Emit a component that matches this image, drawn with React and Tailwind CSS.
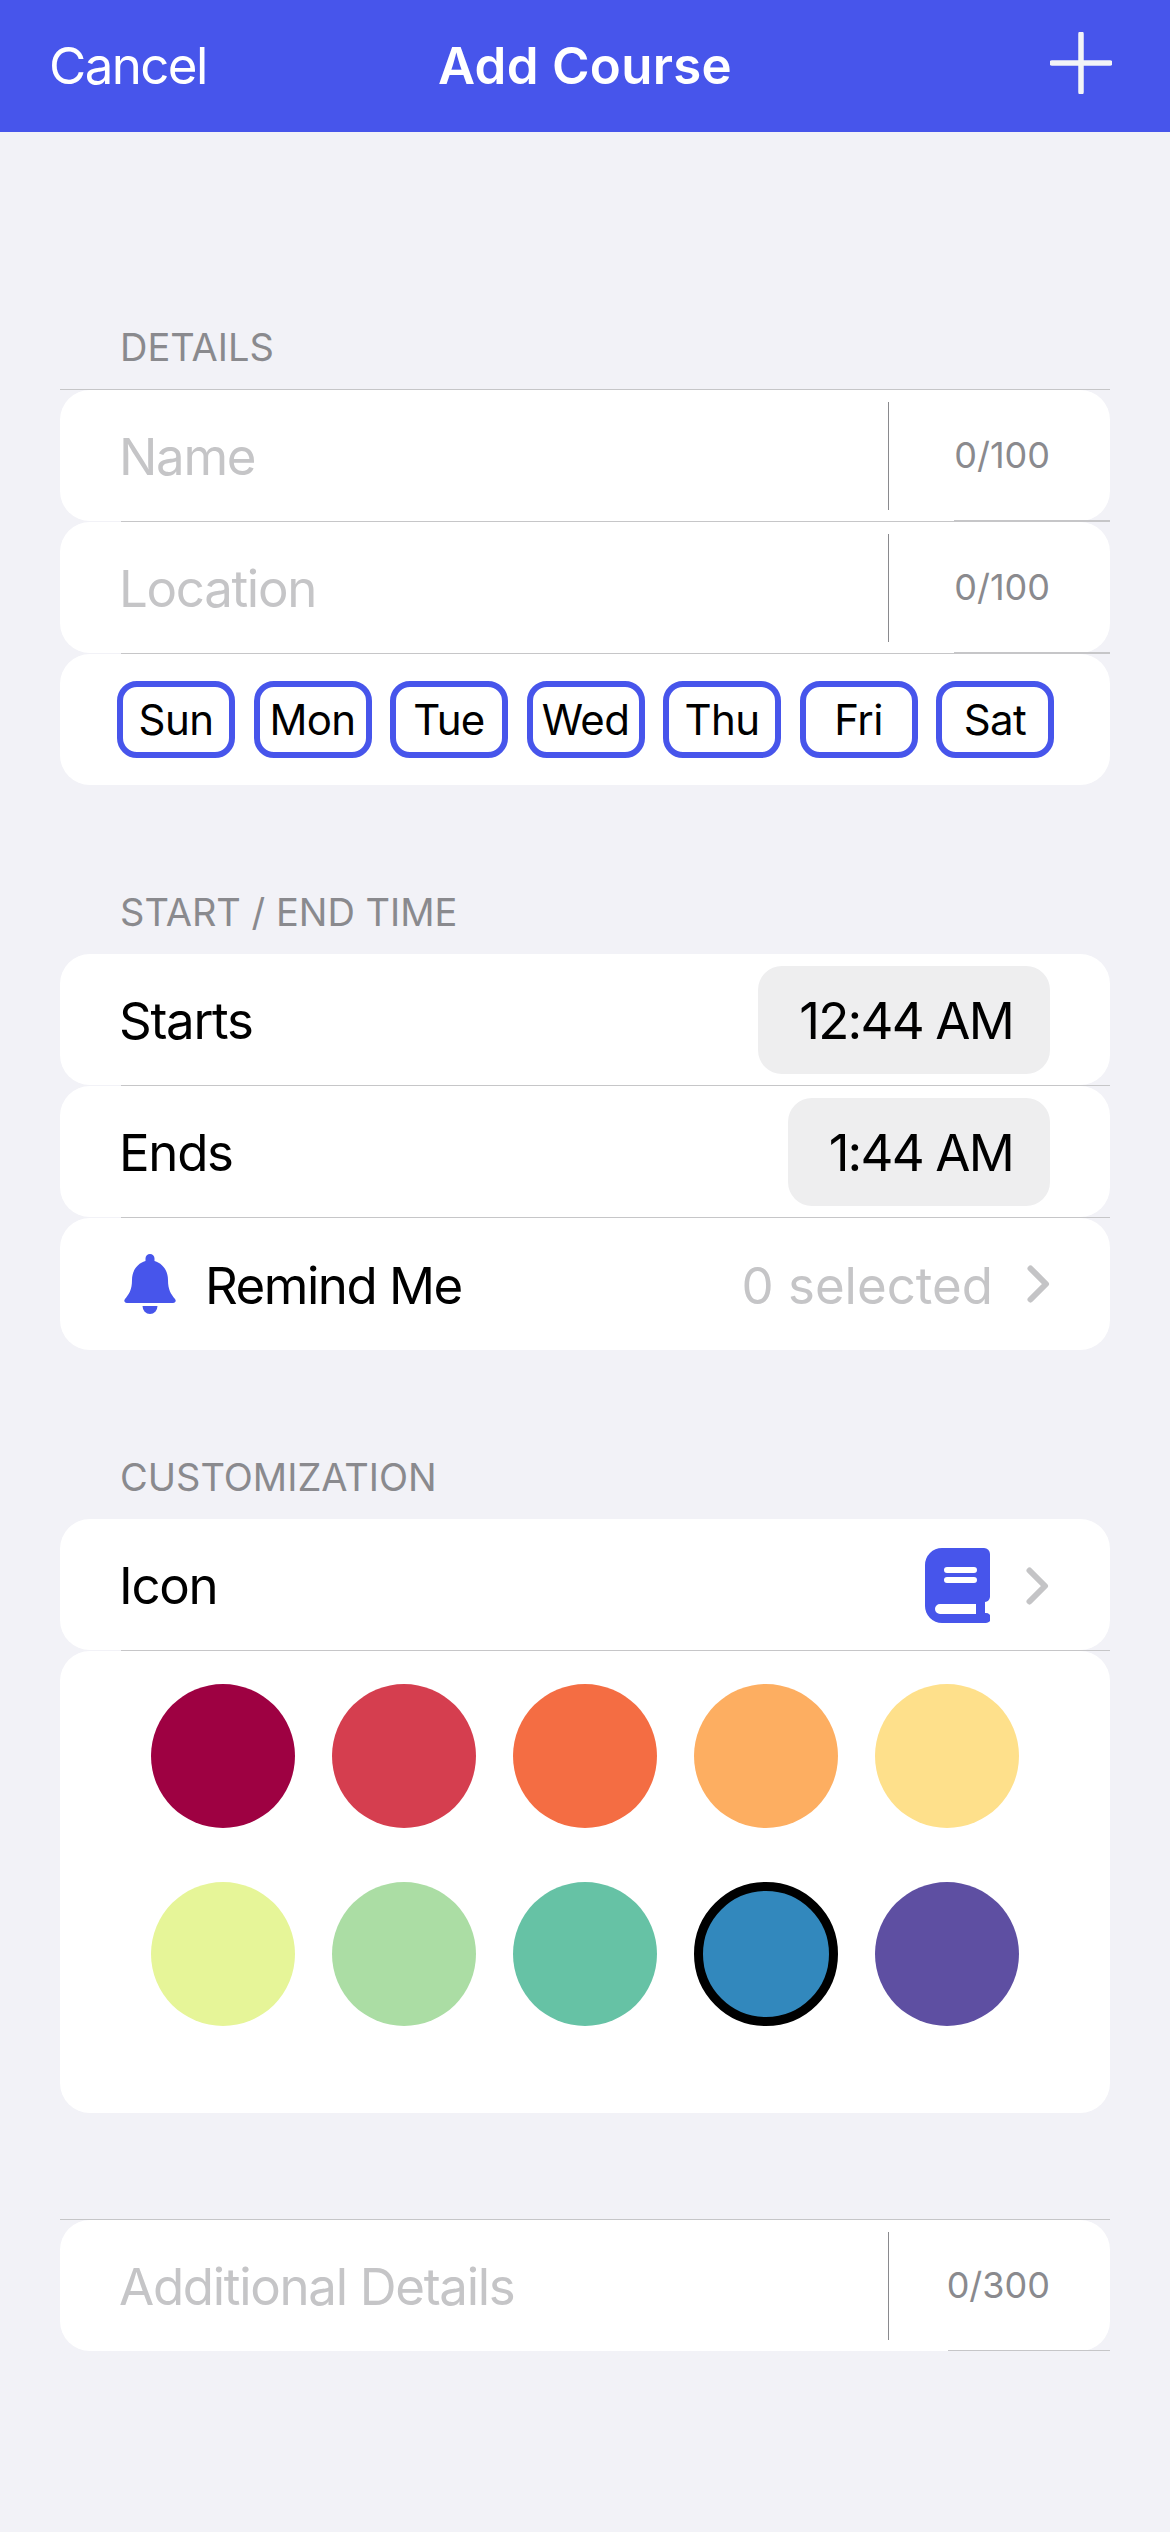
const days = ["Sun", "Mon", "Tue", "Wed", "Thu", "Fri", "Sat"];

const colors = [
  "bg-[#9e0142]",
  "bg-[#d53e4f]",
  "bg-[#f46d43]",
  "bg-[#fdae61]",
  "bg-[#fee08b]",
  "bg-[#e6f598]",
  "bg-[#abdda4]",
  "bg-[#66c2a5]",
  "bg-[#3288bd] border-[9px] border-black",
  "bg-[#5e4fa2]",
];

function Chevron() {
  return (
    <svg width="23" height="38" viewBox="0 0 23 38" fill="none" className="shrink-0">
      <path d="M3.5 3.5L19 19L3.5 34.5" stroke="#c4c4c6" strokeWidth="6" strokeLinecap="round" strokeLinejoin="round" />
    </svg>
  );
}

function Bell() {
  return (
    <svg width="52" height="60" viewBox="0 0 52 60" fill="#4755eb" className="shrink-0">
      <path d="M26 0a4.5 4.5 0 0 1 4.5 4.5V7C39 9.5 44 17 44 26c0 10 3 14 7 19 1.5 2 .5 4-2 4H3c-2.5 0-3.5-2-2-4 4-5 7-9 7-19 0-9 5-16.5 13.5-19V4.5A4.5 4.5 0 0 1 26 0z" />
      <path d="M18.5 52h15a7.5 8 0 0 1-15 0z" />
    </svg>
  );
}

function Book() {
  return (
    <svg width="65" height="75" viewBox="0 0 65 75" className="shrink-0">
      <path
        fill="#4755eb"
        fillRule="evenodd"
        d="M17 0H59a6 6 0 0 1 6 6V49a6 6 0 0 1-5 5V65h1a5 5 0 0 1 0 10H17A17 17 0 0 1 0 58V17A17 17 0 0 1 17 0zM22 19a3 3 0 0 0 0 6H49a3 3 0 0 0 0-6zM22 29a3 3 0 0 0 0 6H49a3 3 0 0 0 0-6zM15 56a5 5 0 0 0 0 10H51V56z"
      />
    </svg>
  );
}

function Line({ full }) {
  return <div className={`h-px bg-[#c6c6c8] ${full ? "" : "ml-[61px]"}`} />;
}

function Label({ children }) {
  return <p className="h-[46px] pl-[60px] text-[38px] leading-[46px] tracking-normal text-[#8a8a8e]">{children}</p>;
}

function Card({ height = "h-[131px]", className = "", children }) {
  return <div className={`flex items-center rounded-[30px] bg-white ${height} ${className}`}>{children}</div>;
}

function FieldRow({ placeholder, count, width }) {
  return (
    <Card>
      <span className="flex-1 pl-[59px] pt-[4px] text-[#c5c5c7]">{placeholder}</span>
      <div className="h-[108px] w-px bg-[#8a8a8e]" />
      <div className="flex h-full w-[221px] justify-end">
        <div className={`flex items-center justify-end border-b border-[#c6c6c8] pr-[60px] text-[36px] tracking-normal text-[#8a8a8e] ${width}`}>
          {count}
        </div>
      </div>
    </Card>
  );
}

function TimeRow({ label, time }) {
  return (
    <Card className="justify-between pl-[59px] pr-[60px]">
      <span className="pt-[4px]">{label}</span>
      <span className="flex h-[108px] items-center rounded-[24px] bg-[#eeeeef] pl-[41px] pr-[37px] pt-[4px] tracking-[-1.8px]">{time}</span>
    </Card>
  );
}

export default function App() {
  return (
    <div className="min-h-[2532px] bg-[#f2f2f7] font-['Inter','Liberation_Sans',sans-serif] text-[51px] tracking-[-1.3px] text-black">
      <header className="flex h-[132px] items-center justify-between bg-[#4755eb] pl-[49px] pr-[58px] text-white">
        <span className="w-[200px] tracking-[-1.6px]">Cancel</span>
        <span className="font-semibold tracking-[0.3px]">Add Course</span>
        <div className="mb-[6px] flex w-[191px] justify-end">
          <svg width="62" height="62" viewBox="0 0 62 62" fill="none">
            <path d="M31 2V60M2 31H60" stroke="#f2f4f7" strokeWidth="5.5" strokeLinecap="round" />
          </svg>
        </div>
      </header>

      <main className="px-[60px] pt-[192px]">
        <section>
          <Label>DETAILS</Label>
          <div className="mt-[19px]">
            <Line full />
            <FieldRow placeholder="Name" count="0/100" width="w-[156px]" />
            <Line />
            <FieldRow placeholder="Location" count="0/100" width="w-[156px]" />
            <Line />
            <Card className="gap-[18.5px] pl-[57px]">
              {days.map((day) => (
                <div
                  key={day}
                  className="flex h-[77px] w-[118px] items-center justify-center rounded-[20px] border-[6px] border-[#4755eb] text-[42px] tracking-[-0.6px]"
                >
                  {day}
                </div>
              ))}
            </Card>
          </div>
        </section>

        <section className="mt-[104px]">
          <Label>START / END TIME</Label>
          <div className="mt-[19px]">
            <TimeRow label="Starts" time="12:44 AM" />
            <Line />
            <TimeRow label="Ends" time="1:44 AM" />
            <Line />
            <Card height="h-[132px]" className="pl-[64px] pr-[60px]">
              <Bell />
              <span className="ml-[29px] flex-1 pt-[4px] tracking-[-1.5px]">Remind Me</span>
              <span className="pt-[4px] tracking-normal text-[#c5c5c7]">0 selected</span>
              <div className="ml-[34px]">
                <Chevron />
              </div>
            </Card>
          </div>
        </section>

        <section className="mt-[104px]">
          <Label>CUSTOMIZATION</Label>
          <div className="mt-[19px]">
            <Card className="justify-between pl-[59px] pr-[61px]">
              <span className="pt-[4px]">Icon</span>
              <div className="mt-[2px] flex items-center gap-[36px]">
                <Book />
                <Chevron />
              </div>
            </Card>
            <Line />
            <div className="h-[462px] rounded-[30px] bg-white pl-[91px] pt-[33px]">
              <div className="grid w-[868px] grid-cols-5 gap-x-[37px] gap-y-[54px]">
                {colors.map((color) => (
                  <div key={color} className={`h-[144px] w-[144px] rounded-full ${color}`} />
                ))}
              </div>
            </div>
          </div>
        </section>

        <section className="mt-[106px]">
          <Line full />
          <FieldRow placeholder="Additional Details" count="0/300" width="w-[162px]" />
        </section>
      </main>
    </div>
  );
}
